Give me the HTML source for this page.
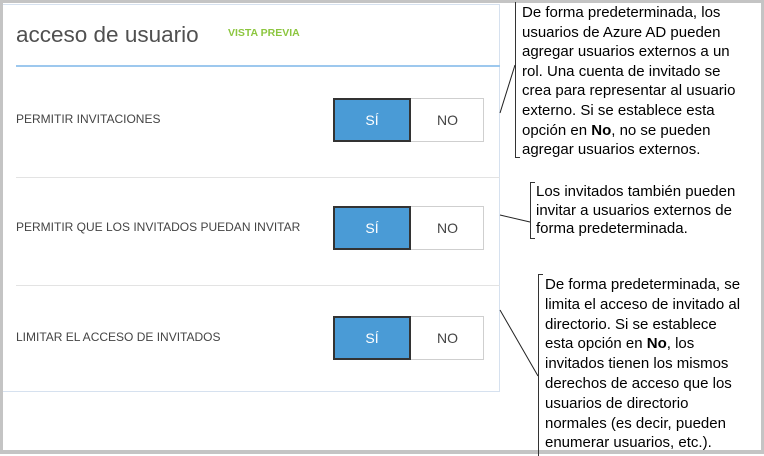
<!DOCTYPE html>
<html><head><meta charset="utf-8"><style>
*{margin:0;padding:0;box-sizing:border-box}
body{width:764px;height:454px;position:relative;background:#fff;font-family:"Segoe UI","Liberation Sans",sans-serif;overflow:hidden}
.frame{position:absolute;left:0;top:0;width:764px;height:454px;border:3px solid #c4c4c4;border-bottom-width:4px}
.panel{position:absolute;left:3px;top:4px;width:497px;height:388px;border:1px solid #d6e1ef;border-left:none}
.title{position:absolute;left:16px;top:22px;font-size:22.5px;color:#505050}
.prev{position:absolute;left:228px;top:27px;font-size:10.5px;font-weight:bold;color:#8cc63f}
.hl{position:absolute;left:16px;top:65px;width:484px;height:2px;background:#9dc8ee}
.sep{position:absolute;left:16px;width:484px;height:1px;background:#e3e3e3}
.lbl{position:absolute;left:16px;font-size:12px;color:#444;white-space:nowrap}
.tg{position:absolute;left:333px;width:151px;height:44px;border:1px solid #cfcfcf;background:#fff}
.tg .y{position:absolute;left:-1px;top:-1px;width:78px;height:44px;background:#4a9bd6;border:2px solid #333;color:#fff;font-size:14px;text-align:center;line-height:40px}
.tg .n{position:absolute;left:77px;top:0;width:73px;height:42px;color:#444;font-size:14px;text-align:center;line-height:42px}
.c{position:absolute;font-size:15px;color:#000;white-space:nowrap}
.br{position:absolute;border-left:1px solid #333;border-top:1px solid #333;border-bottom:1px solid #333;width:5px}
</style></head><body>
<div class="frame"></div>
<div class="panel"></div>
<div class="title">acceso de usuario</div>
<div class="prev">VISTA PREVIA</div>
<div class="hl"></div>
<div class="sep" style="top:177px"></div>
<div class="sep" style="top:285px"></div>
<div class="lbl" style="top:112px">PERMITIR INVITACIONES</div>
<div class="lbl" style="top:220px">PERMITIR QUE LOS INVITADOS PUEDAN INVITAR</div>
<div class="lbl" style="top:330px">LIMITAR EL ACCESO DE INVITADOS</div>
<div class="tg" style="top:98px"><div class="y">SÍ</div><div class="n">NO</div></div>
<div class="tg" style="top:206px"><div class="y">SÍ</div><div class="n">NO</div></div>
<div class="tg" style="top:316px"><div class="y">SÍ</div><div class="n">NO</div></div>
<div class="br" style="left:515px;top:2px;height:156px;border-top:none"></div>
<div class="br" style="left:530px;top:182px;height:57px"></div>
<div class="br" style="left:538px;top:274px;height:182px;border-bottom:none"></div>
<svg style="position:absolute;left:0;top:0" width="764" height="454"><g stroke="#222" stroke-width="1"><line x1="500" y1="113" x2="515" y2="65"/><line x1="500" y1="215" x2="530" y2="222"/><line x1="500" y1="310" x2="538" y2="376"/></g></svg>
<div class="c" style="left:522px;top:3px;line-height:19.6px">De forma predeterminada, los<br>usuarios de Azure AD pueden<br>agregar usuarios externos a un<br>rol. Una cuenta de invitado se<br>crea para representar al usuario<br>externo. Si se establece esta<br>opción en <b>No</b>, no se pueden<br>agregar usuarios externos.</div>
<div class="c" style="left:536px;top:183px;line-height:18.6px">Los invitados también pueden<br>invitar a usuarios externos de<br>forma predeterminada.</div>
<div class="c" style="left:545px;top:275px;line-height:19.8px">De forma predeterminada, se<br>limita el acceso de invitado al<br>directorio. Si se establece<br>esta opción en <b>No</b>, los<br>invitados tienen los mismos<br>derechos de acceso que los<br>usuarios de directorio<br>normales (es decir, pueden<br>enumerar usuarios, etc.).</div>
</body></html>
